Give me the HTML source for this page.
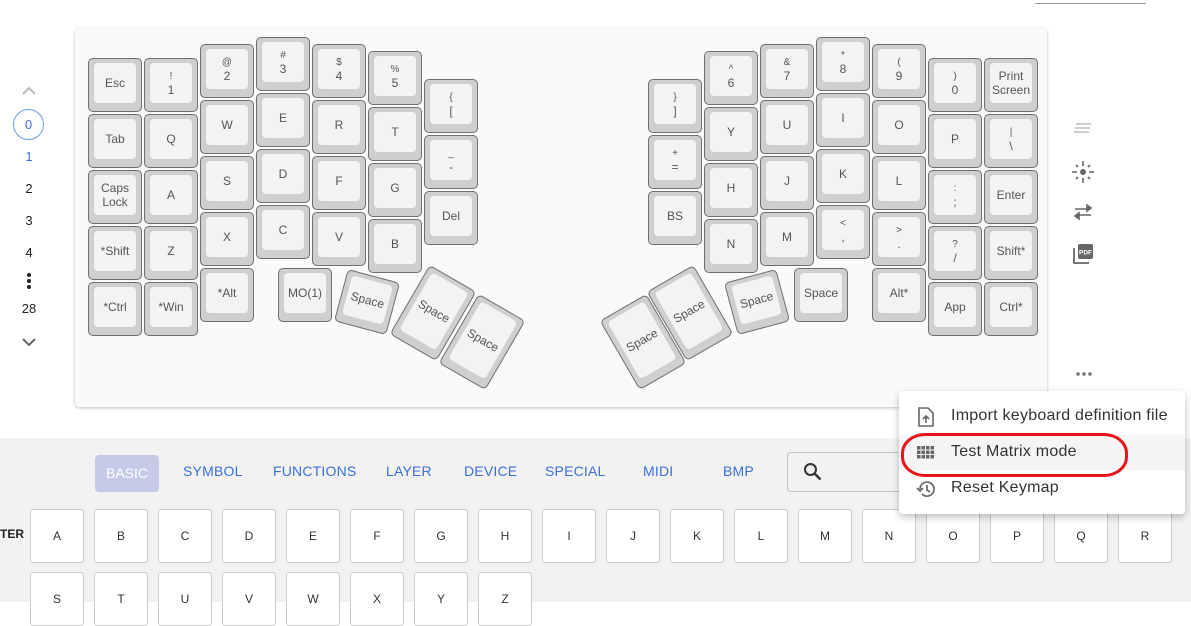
<!DOCTYPE html>
<html><head><meta charset="utf-8"><style>
body{margin:0;width:1191px;height:602px;overflow:hidden;background:#fff;font-family:"Liberation Sans",sans-serif;position:relative}
.kb{position:absolute;left:75px;top:28px;width:972px;height:379px;background:#fafafa;border-radius:4px;box-shadow:0 1px 3px rgba(0,0,0,.25)}
.k{position:absolute;width:54px;height:54px;box-sizing:border-box;border:1px solid #6f6f6f;border-radius:5px;background:#cfcfcf}
.k i{position:absolute;left:5px;right:5px;top:4px;bottom:8px;background:#f3f3f3;border-radius:4px;display:flex;align-items:center;justify-content:center;text-align:center;font-size:12px;color:#555;line-height:14px;font-style:normal}
.k i b{font-weight:normal;font-size:10px;display:block;line-height:13px}
.tall{height:80px}
.lay{position:absolute;left:0;width:58px;text-align:center;font-size:13px;color:#222}
.tab{position:absolute;top:463px;font-size:14px;color:#3d6fd6;letter-spacing:.2px}
.bk{position:absolute;width:54px;height:54px;box-sizing:border-box;background:#fff;border:1px solid #ccc;border-radius:3px;font-size:12px;color:#333;display:flex;align-items:center;justify-content:center}
.mi{position:absolute;left:951px;font-size:16px;color:#333;letter-spacing:.25px}
</style></head><body>
<div style="position:absolute;left:1035px;top:3px;width:111px;height:1px;background:#999"></div>
<div class="kb"></div>

<!-- left half -->
<div class="k" style="left:88px;top:58px"><i>Esc</i></div>
<div class="k" style="left:88px;top:114px"><i>Tab</i></div>
<div class="k" style="left:88px;top:170px"><i>Caps<br>Lock</i></div>
<div class="k" style="left:88px;top:226px"><i>*Shift</i></div>
<div class="k" style="left:88px;top:282px"><i>*Ctrl</i></div>
<div class="k" style="left:144px;top:58px"><i><span><b>!</b>1</span></i></div>
<div class="k" style="left:144px;top:114px"><i>Q</i></div>
<div class="k" style="left:144px;top:170px"><i>A</i></div>
<div class="k" style="left:144px;top:226px"><i>Z</i></div>
<div class="k" style="left:144px;top:282px"><i>*Win</i></div>
<div class="k" style="left:200px;top:44px"><i><span><b>@</b>2</span></i></div>
<div class="k" style="left:200px;top:100px"><i>W</i></div>
<div class="k" style="left:200px;top:156px"><i>S</i></div>
<div class="k" style="left:200px;top:212px"><i>X</i></div>
<div class="k" style="left:200px;top:268px"><i>*Alt</i></div>
<div class="k" style="left:256px;top:37px"><i><span><b>#</b>3</span></i></div>
<div class="k" style="left:256px;top:93px"><i>E</i></div>
<div class="k" style="left:256px;top:149px"><i>D</i></div>
<div class="k" style="left:256px;top:205px"><i>C</i></div>
<div class="k" style="left:312px;top:44px"><i><span><b>$</b>4</span></i></div>
<div class="k" style="left:312px;top:100px"><i>R</i></div>
<div class="k" style="left:312px;top:156px"><i>F</i></div>
<div class="k" style="left:312px;top:212px"><i>V</i></div>
<div class="k" style="left:368px;top:51px"><i><span><b>%</b>5</span></i></div>
<div class="k" style="left:368px;top:107px"><i>T</i></div>
<div class="k" style="left:368px;top:163px"><i>G</i></div>
<div class="k" style="left:368px;top:219px"><i>B</i></div>
<div class="k" style="left:424px;top:79px"><i><span><b>{</b>[</span></i></div>
<div class="k" style="left:424px;top:135px"><i><span><b>_</b>-</span></i></div>
<div class="k" style="left:424px;top:191px"><i>Del</i></div>
<div class="k" style="left:278px;top:268px"><i>MO(1)</i></div>
<div class="k" style="left:340px;top:275px;transform:rotate(15deg)"><i>Space</i></div>
<div class="k tall" style="left:406px;top:273px;transform:rotate(30deg)"><i>Space</i></div>
<div class="k tall" style="left:455px;top:302px;transform:rotate(30deg)"><i>Space</i></div>

<!-- right half -->
<div class="k" style="left:648px;top:79px"><i><span><b>}</b>]</span></i></div>
<div class="k" style="left:648px;top:135px"><i><span><b>+</b>=</span></i></div>
<div class="k" style="left:648px;top:191px"><i>BS</i></div>
<div class="k" style="left:704px;top:51px"><i><span><b>^</b>6</span></i></div>
<div class="k" style="left:704px;top:107px"><i>Y</i></div>
<div class="k" style="left:704px;top:163px"><i>H</i></div>
<div class="k" style="left:704px;top:219px"><i>N</i></div>
<div class="k" style="left:760px;top:44px"><i><span><b>&amp;</b>7</span></i></div>
<div class="k" style="left:760px;top:100px"><i>U</i></div>
<div class="k" style="left:760px;top:156px"><i>J</i></div>
<div class="k" style="left:760px;top:212px"><i>M</i></div>
<div class="k" style="left:816px;top:37px"><i><span><b>*</b>8</span></i></div>
<div class="k" style="left:816px;top:93px"><i>I</i></div>
<div class="k" style="left:816px;top:149px"><i>K</i></div>
<div class="k" style="left:816px;top:205px"><i><span><b>&lt;</b>,</span></i></div>
<div class="k" style="left:872px;top:44px"><i><span><b>(</b>9</span></i></div>
<div class="k" style="left:872px;top:100px"><i>O</i></div>
<div class="k" style="left:872px;top:156px"><i>L</i></div>
<div class="k" style="left:872px;top:212px"><i><span><b>&gt;</b>.</span></i></div>
<div class="k" style="left:872px;top:268px"><i>Alt*</i></div>
<div class="k" style="left:928px;top:58px"><i><span><b>)</b>0</span></i></div>
<div class="k" style="left:928px;top:114px"><i>P</i></div>
<div class="k" style="left:928px;top:170px"><i><span><b>:</b>;</span></i></div>
<div class="k" style="left:928px;top:226px"><i><span><b>?</b>/</span></i></div>
<div class="k" style="left:928px;top:282px"><i>App</i></div>
<div class="k" style="left:984px;top:58px"><i>Print<br>Screen</i></div>
<div class="k" style="left:984px;top:114px"><i><span><b>|</b>\</span></i></div>
<div class="k" style="left:984px;top:170px"><i>Enter</i></div>
<div class="k" style="left:984px;top:226px"><i>Shift*</i></div>
<div class="k" style="left:984px;top:282px"><i>Ctrl*</i></div>
<div class="k" style="left:794px;top:268px"><i>Space</i></div>
<div class="k" style="left:730px;top:275px;transform:rotate(-15deg)"><i>Space</i></div>
<div class="k tall" style="left:663px;top:273px;transform:rotate(-30deg)"><i>Space</i></div>
<div class="k tall" style="left:616px;top:302px;transform:rotate(-30deg)"><i>Space</i></div>

<!-- layer list -->
<svg style="position:absolute;left:22px;top:86px" width="14" height="10"><path d="M1 8 L7 2 L13 8" fill="none" stroke="#bbb" stroke-width="2"/></svg>
<div style="position:absolute;left:13px;top:109px;width:31px;height:31px;box-sizing:border-box;border:1px solid #6a9be0;border-radius:50%;text-align:center;line-height:29px;font-size:13px;color:#3d6fd6">0</div>
<div class="lay" style="top:149px;color:#3d6fd6">1</div>
<div class="lay" style="top:181px">2</div>
<div class="lay" style="top:213px">3</div>
<div class="lay" style="top:245px">4</div>
<svg style="position:absolute;left:26px;top:272px" width="6" height="18"><circle cx="3" cy="3" r="2" fill="#222"/><circle cx="3" cy="9" r="2" fill="#222"/><circle cx="3" cy="15" r="2" fill="#222"/></svg>
<div class="lay" style="top:301px">28</div>
<svg style="position:absolute;left:22px;top:337px" width="14" height="10"><path d="M1 2 L7 8 L13 2" fill="none" stroke="#666" stroke-width="2"/></svg>

<!-- right icons -->
<svg style="position:absolute;left:1073px;top:122px" width="20" height="14"><path d="M3 2h15M2 6h15M1 10h15" stroke="#bbb" stroke-width="1.5"/></svg>
<svg style="position:absolute;left:1071px;top:160px" width="24" height="24"><circle cx="12" cy="12" r="3" fill="#666"/><path d="M12 1v5M12 18v5M1 12h5M18 12h5M5 5l2 2M17 17l2 2M19 5l-2 2M5 19l2-2" stroke="#666" stroke-width="1.6"/></svg>
<svg style="position:absolute;left:1073px;top:204px" width="20" height="16"><path d="M6 11h12M2 12l4-3v6zM14 5H2M18 4l-4-3v6z" stroke="#666" stroke-width="1.6" fill="#666"/></svg>
<svg style="position:absolute;left:1072px;top:243px" width="22" height="22"><path d="M2 5v15h15" fill="none" stroke="#666" stroke-width="1.8"/><rect x="6" y="1" width="15" height="15" rx="2" fill="#666"/><text x="13.5" y="11.5" font-size="6.5" font-weight="bold" fill="#fff" text-anchor="middle" font-family="Liberation Sans">PDF</text></svg>
<svg style="position:absolute;left:1075px;top:371px" width="18" height="6"><circle cx="3" cy="3" r="1.8" fill="#777"/><circle cx="9" cy="3" r="1.8" fill="#777"/><circle cx="15" cy="3" r="1.8" fill="#777"/></svg>

<!-- bottom panel -->
<div style="position:absolute;left:0;top:438px;width:1191px;height:164px;background:#f2f2f2"></div>
<div style="position:absolute;left:95px;top:455px;width:64px;height:37px;background:#c5cae9;border-radius:4px;color:#fff;font-size:14px;text-align:center;line-height:36px">BASIC</div>
<div class="tab" style="left:183px">SYMBOL</div>
<div class="tab" style="left:273px">FUNCTIONS</div>
<div class="tab" style="left:386px">LAYER</div>
<div class="tab" style="left:464px">DEVICE</div>
<div class="tab" style="left:545px">SPECIAL</div>
<div class="tab" style="left:643px">MIDI</div>
<div class="tab" style="left:723px">BMP</div>
<div style="position:absolute;left:787px;top:452px;width:130px;height:40px;box-sizing:border-box;border:1px solid #c4c4c4;border-radius:4px;background:#f2f2f2"></div>
<svg style="position:absolute;left:802px;top:461px" width="22" height="22"><circle cx="8.5" cy="8.5" r="5.5" fill="none" stroke="#333" stroke-width="2"/><path d="M12.5 12.5l6 6" stroke="#333" stroke-width="2.4"/></svg>
<div style="position:absolute;left:0;top:527px;font-size:12px;font-weight:bold;color:#222">TER</div>
<div class="bk" style="left:30px;top:509px">A</div><div class="bk" style="left:94px;top:509px">B</div><div class="bk" style="left:158px;top:509px">C</div><div class="bk" style="left:222px;top:509px">D</div><div class="bk" style="left:286px;top:509px">E</div><div class="bk" style="left:350px;top:509px">F</div><div class="bk" style="left:414px;top:509px">G</div><div class="bk" style="left:478px;top:509px">H</div><div class="bk" style="left:542px;top:509px">I</div><div class="bk" style="left:606px;top:509px">J</div><div class="bk" style="left:670px;top:509px">K</div><div class="bk" style="left:734px;top:509px">L</div><div class="bk" style="left:798px;top:509px">M</div><div class="bk" style="left:862px;top:509px">N</div><div class="bk" style="left:926px;top:509px">O</div><div class="bk" style="left:990px;top:509px">P</div><div class="bk" style="left:1054px;top:509px">Q</div><div class="bk" style="left:1118px;top:509px">R</div>
<div class="bk" style="left:30px;top:572px">S</div><div class="bk" style="left:94px;top:572px">T</div><div class="bk" style="left:158px;top:572px">U</div><div class="bk" style="left:222px;top:572px">V</div><div class="bk" style="left:286px;top:572px">W</div><div class="bk" style="left:350px;top:572px">X</div><div class="bk" style="left:414px;top:572px">Y</div><div class="bk" style="left:478px;top:572px">Z</div>

<!-- menu -->
<div style="position:absolute;left:899px;top:391px;width:286px;height:123px;background:#fff;border-radius:4px;box-shadow:0 3px 8px rgba(0,0,0,.25)"></div>
<div style="position:absolute;left:899px;top:435px;width:286px;height:35px;background:#f5f5f5"></div>
<svg style="position:absolute;left:917px;top:407px" width="18" height="20"><path d="M2 1h9l5 5v13H2z" fill="none" stroke="#666" stroke-width="1.6"/><path d="M9 16v-6M6 12l3-3 3 3" stroke="#666" stroke-width="1.6" fill="none"/></svg>
<div class="mi" style="top:407px">Import keyboard definition file</div>
<svg style="position:absolute;left:917px;top:446px" width="18" height="14"><g fill="#666"><rect x="0" y="0" width="3.5" height="3.5"/><rect x="4.5" y="0" width="3.5" height="3.5"/><rect x="9" y="0" width="3.5" height="3.5"/><rect x="13.5" y="0" width="3.5" height="3.5"/><rect x="0" y="4.5" width="3.5" height="3.5"/><rect x="4.5" y="4.5" width="3.5" height="3.5"/><rect x="9" y="4.5" width="3.5" height="3.5"/><rect x="13.5" y="4.5" width="3.5" height="3.5"/><rect x="0" y="9" width="3.5" height="3.5"/><rect x="4.5" y="9" width="3.5" height="3.5"/><rect x="9" y="9" width="3.5" height="3.5"/><rect x="13.5" y="9" width="3.5" height="3.5"/></g></svg>
<div class="mi" style="top:443px">Test Matrix mode</div>
<svg style="position:absolute;left:916px;top:480px" width="20" height="18"><path d="M4 9a7 7 0 1 1 2 5" fill="none" stroke="#666" stroke-width="1.7"/><path d="M1 8l3 3 3-3" fill="none" stroke="#666" stroke-width="1.7"/><path d="M11 5v5l3 2" fill="none" stroke="#666" stroke-width="1.7"/></svg>
<div class="mi" style="top:479px">Reset Keymap</div>
<div style="position:absolute;left:901px;top:433px;width:227px;height:44px;box-sizing:border-box;border:3px solid #e8141c;border-radius:24px/20px"></div>
</body></html>
